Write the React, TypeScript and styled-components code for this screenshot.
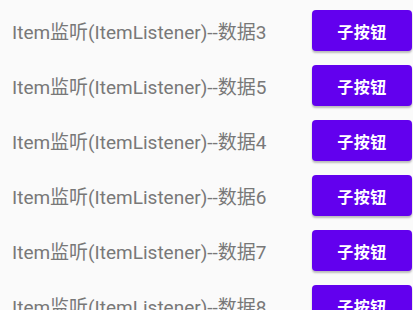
import React from "react";
import styled, { createGlobalStyle } from "styled-components";

const Global = createGlobalStyle`
  html, body { margin: 0; padding: 0; background: #fafafa; overflow: hidden; }
  body { font-family: Roboto, "Noto Sans CJK SC", sans-serif; }
`;

const List = styled.div`
  display: flex;
  flex-direction: column;
  gap: 14px;
  padding: 10px 1px 0 12px;
  width: 413px;
  height: 310px;
  box-sizing: border-box;
  overflow: hidden;
`;

const Row = styled.div`
  display: flex;
  flex: none;
  align-items: center;
  justify-content: space-between;
  height: 41px;
`;

const Label = styled.span`
  font-family: Roboto, "Noto Sans CJK SC", sans-serif;
  font-size: 19px;
  color: #787878;
  white-space: nowrap;
`;

const SubButton = styled.button`
  width: 100px;
  height: 41px;
  border: none;
  border-radius: 4px;
  background: #6200ee;
  color: #ffffff;
  font-family: "Noto Sans CJK SC", Roboto, sans-serif;
  font-weight: 700;
  font-size: 16px;
  box-shadow: 0 2px 2px rgba(0, 0, 0, 0.25);
  padding: 0;
  letter-spacing: 0.5px;
`;

const data = [3, 5, 4, 6, 7, 8];

export default function App() {
  return (
    <>
      <Global />
      <List>
        {data.map((n) => (
          <Row key={n}>
            <Label>Item监听(ItemListener)--数据{n}</Label>
            <SubButton>子按钮</SubButton>
          </Row>
        ))}
      </List>
    </>
  );
}
